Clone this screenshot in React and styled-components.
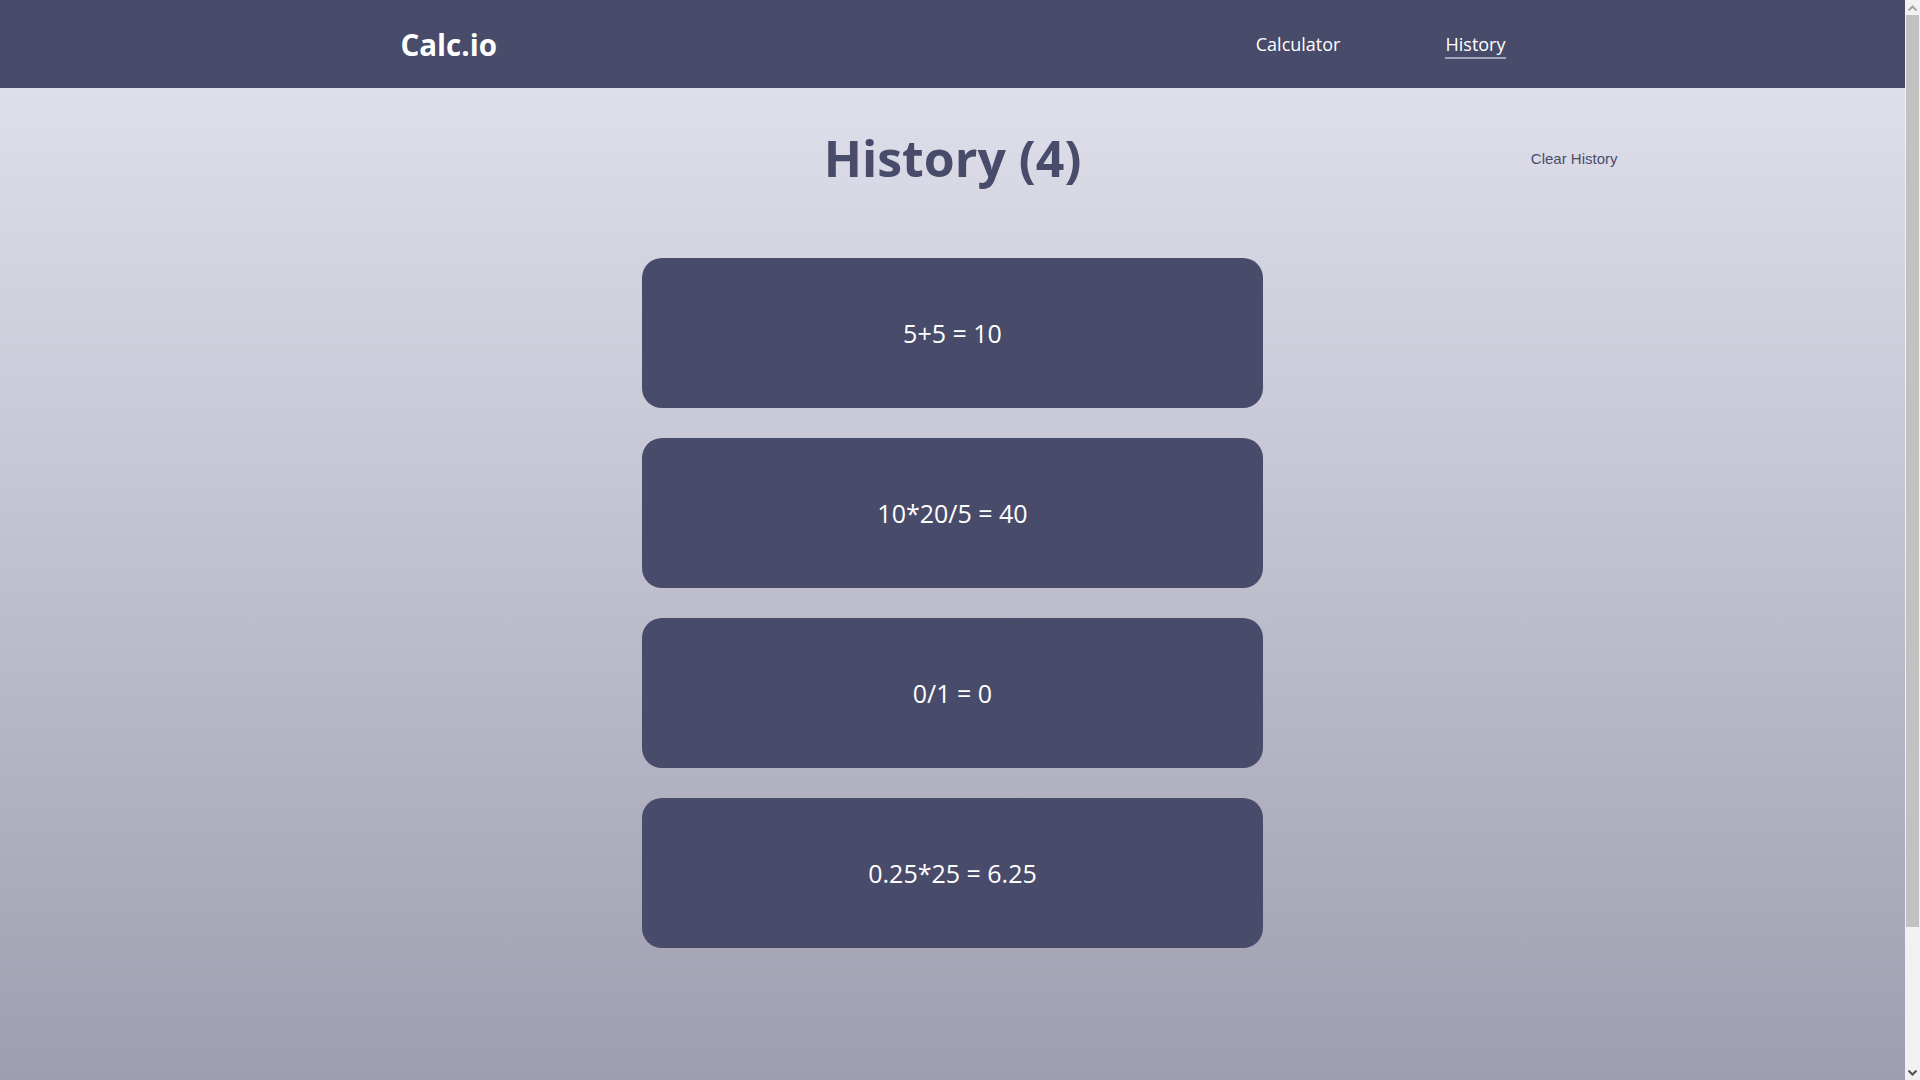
import React from "react";
import styled, { createGlobalStyle } from "styled-components";

const GlobalStyle = createGlobalStyle`
  html, body { margin: 0; padding: 0; }
  body {
    font-family: "Open Sans", "Noto Sans", sans-serif;
    background: #9393a6;
    margin-right: 15px;
  }
  * { box-sizing: border-box; }
`;

const Header = styled.header`
  height: 88px;
  background: #494b6a;
`;

const HeaderInner = styled.div`
  max-width: 1140px;
  height: 100%;
  margin: 0 auto;
  padding: 0 17px 0 18px;
  display: flex;
  align-items: center;
  justify-content: space-between;
`;

const Logo = styled.div`
  color: #ffffff;
  font-size: 29.5px;
  font-weight: 700;
`;

const Nav = styled.nav`
  display: flex;
  align-items: center;
  gap: 105px;
`;

const NavLink = styled.a`
  color: #ffffff;
  font-size: 18px;
  text-decoration: none;
  line-height: 24px;
  padding-bottom: 1px;
  border-bottom: 2px solid ${(p) => (p.$active ? "#a3a3bb" : "transparent")};
  margin-top: 3px;
  cursor: pointer;
`;

const Main = styled.main`
  box-sizing: content-box;
  min-height: 100vh;
  padding: 38px 0;
  background: linear-gradient(180deg, #dfdfeb 0%, #9393a6 100%);
`;

const TitleRow = styled.div`
  width: 1342px;
  margin: 0 auto;
  display: grid;
  grid-template-columns: 1fr auto 1fr;
  align-items: center;
`;

const Title = styled.h1`
  grid-column: 2;
  margin: 0;
  font-size: 50px;
  line-height: 64px;
  font-weight: 700;
  color: #494b6a;
`;

const ClearButton = styled.button`
  justify-self: end;
  background: transparent;
  border: none;
  padding: 6px 6px;
  font-family: "Liberation Sans", Arial, sans-serif;
  font-size: 15px;
  color: #4a4c6a;
  cursor: pointer;
`;

const List = styled.div`
  width: 621px;
  margin: 68px auto 0;
  display: flex;
  flex-direction: column;
  gap: 30px;
`;

const Card = styled.div`
  height: 150px;
  border-radius: 20px;
  background: #494b6a;
  display: flex;
  align-items: center;
  justify-content: center;
  color: #ffffff;
  font-size: 25px;
`;

/* imitation of the browser's classic scrollbar, drawn over the right edge */
const ScrollBar = styled.div`
  position: fixed;
  top: 0;
  right: 0;
  width: 15px;
  height: 100vh;
  background: #f1f1f1;
  display: flex;
  flex-direction: column;
`;

const ScrollArrow = styled.div`
  height: 15px;
  flex: none;
  display: flex;
  align-items: center;
  justify-content: center;
`;

const ScrollTrack = styled.div`
  flex: 1;
  display: flex;
  flex-direction: column;
`;

const ScrollThumb = styled.div`
  height: 912px;
  margin: 0 1px;
  background: #c1c1c1;
`;

const Chevron = ({ up, color }) => (
  <svg width="9" height="6" viewBox="0 0 9 6">
    <path
      d={up ? "M0.5 5.5 L4.5 1.5 L8.5 5.5" : "M0.5 0.5 L4.5 4.5 L8.5 0.5"}
      fill="none"
      stroke={color}
      strokeWidth="2"
    />
  </svg>
);

const history = ["5+5 = 10", "10*20/5 = 40", "0/1 = 0", "0.25*25 = 6.25"];

export default function App() {
  return (
    <>
      <GlobalStyle />
      <Header>
        <HeaderInner>
          <Logo>Calc.io</Logo>
          <Nav>
            <NavLink>Calculator</NavLink>
            <NavLink $active>History</NavLink>
          </Nav>
        </HeaderInner>
      </Header>
      <Main>
        <TitleRow>
          <Title>History ({history.length})</Title>
          <ClearButton>Clear History</ClearButton>
        </TitleRow>
        <List>
          {history.map((h) => (
            <Card key={h}>{h}</Card>
          ))}
        </List>
      </Main>
      <ScrollBar>
        <ScrollArrow>
          <Chevron up color="#a3a3a3" />
        </ScrollArrow>
        <ScrollTrack>
          <ScrollThumb />
        </ScrollTrack>
        <ScrollArrow>
          <Chevron color="#505050" />
        </ScrollArrow>
      </ScrollBar>
    </>
  );
}
